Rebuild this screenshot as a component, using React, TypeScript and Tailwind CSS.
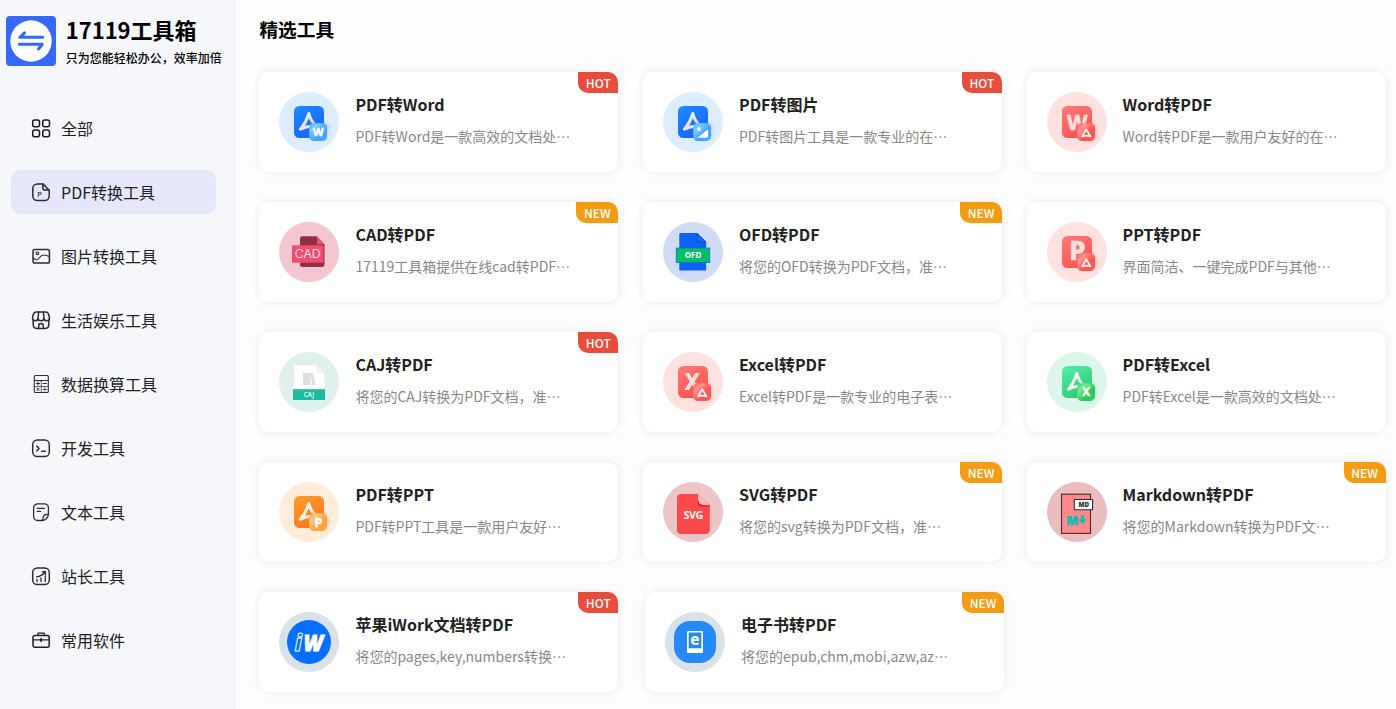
import type { ReactNode } from "react";

const LETTER = "'Noto Sans', 'Noto Sans CJK SC', sans-serif";

/* ---------- sidebar icons (20 x 20) ---------- */

function Line({ children, color = "#2b2d33" }: { children: ReactNode; color?: string }) {
  return (
    <svg width="20" height="20" viewBox="0 0 20 20" fill="none" stroke={color} strokeWidth="1.5" strokeLinecap="round" strokeLinejoin="round" className="shrink-0">
      {children}
    </svg>
  );
}

const menu: { label: string; icon: ReactNode; active?: boolean }[] = [
  {
    label: "全部",
    icon: (
      <Line color="#1a1a1a">
        <rect x="1.7" y="2" width="6.8" height="6.8" rx="2" />
        <rect x="11.7" y="2" width="6.8" height="6.8" rx="2" />
        <rect x="1.7" y="12" width="6.8" height="6.8" rx="2" />
        <rect x="11.7" y="12" width="6.8" height="6.8" rx="2" />
      </Line>
    ),
  },
  {
    label: "PDF转换工具",
    active: true,
    icon: (
      <Line>
        <path d="M11.8 1.9H6.2A4.4 4.4 0 0 0 1.8 6.3v7.8a4.4 4.4 0 0 0 4.4 4.4h7.6a4.4 4.4 0 0 0 4.4-4.4V8.2z" />
        <path d="M11.8 1.9v3.6a2.6 2.6 0 0 0 2.6 2.6h3.8" />
        <text x="8.6" y="14.9" fontSize="7.5" fontWeight="500" fill="#2b2d33" stroke="none" textAnchor="middle" style={{ fontFamily: LETTER }}>
          P
        </text>
      </Line>
    ),
  },
  {
    label: "图片转换工具",
    icon: (
      <Line>
        <rect x="2" y="3.6" width="16.4" height="13.4" rx="1.8" />
        <circle cx="6.4" cy="7.3" r="1.3" strokeWidth="1.2" />
        <path d="M2.2 12.4c1.300 0 2.200 1.300 3.500 1.600 1.900.2 2.900-5 7.100-5 2.500 0 3.400 1 5.500 1.500" strokeWidth="1.2" />
      </Line>
    ),
  },
  {
    label: "生活娱乐工具",
    icon: (
      <Line>
        <path d="M5.200 2h9.600c1.800 0 2.600 1.200 3 3l.7 3c0 1.700-1.200 2.700-2.700 2.700s-2.800-1-2.800-2.500c0 1.500-1.300 2.500-3 2.500s-3-1-3-2.500c0 1.500-1.300 2.500-2.800 2.500S1.500 9.700 1.500 8l.7-3c.4-1.800 1.200-3 3-3Z" />
        <path d="M7 8.200 7.700 2M13 8.200 12.300 2" />
        <path d="M2.200 10v4.500c0 2.800 1.200 4 4 4h7.600c2.800 0 4-1.200 4-4V10" />
        <path d="M7.700 18.400v-2.500a2.300 2.300 0 0 1 4.600 0v2.500" />
      </Line>
    ),
  },
  {
    label: "数据换算工具",
    icon: (
      <Line>
        <g strokeWidth="1.100">
          <rect x="3.300" y="1.500" width="14" height="17" rx="1" />
          <path d="M3.500 6.500h14" />
          <path d="M10.300 7v11M4 12.500h13" strokeWidth="0.700" />
          <path d="M5.300 9.500h3.400M7 7.900v3.200M12.100 9.500h3.400M5.700 14l2.600 2.600M8.300 14l-2.600 2.600M12.100 15.400h3.400M13.800 13.700v.1M13.800 17v.1" strokeWidth="1" />
        </g>
      </Line>
    ),
  },
  {
    label: "开发工具",
    icon: (
      <Line>
        <rect x="1.700" y="2" width="16.600" height="16.600" rx="4.600" />
        <path d="m5.800 8 2.300 2.500-2.300 2.500M10.700 13.200h3.600" />
      </Line>
    ),
  },
  {
    label: "文本工具",
    icon: (
      <Line>
        <g strokeWidth="1.300">
          <path d="M10.700 18.500H6.600a4 4 0 0 1-4-4V5.800a4 4 0 0 1 4-4h6.800a4 4 0 0 1 4 4v6.500c0 3.400-3.300 6.200-6.700 6.200Z" />
          <path d="M17.300 12.500c-4.300-.3-5.500 1-5.500 5.700" />
          <path d="M6.300 6.300h7.200M6.300 9.400h3.200" />
        </g>
      </Line>
    ),
  },
  {
    label: "站长工具",
    icon: (
      <Line>
        <rect x="1.700" y="2" width="16.600" height="16.600" rx="4.600" />
        <path d="M6 15.500v-2M10 15.500v-3.600M14.300 15.500v-5.500" strokeWidth="1.300" />
        <path d="M5.600 10.900c3.500-.4 6-1.800 8.500-4.900M11.400 5.700h3v3" strokeWidth="1.400" />
      </Line>
    ),
  },
  {
    label: "常用软件",
    icon: (
      <Line color="#1f2024">
        <rect x="2" y="5.500" width="16.200" height="11.700" rx="2" />
        <path d="M7 5.300V3.200h6.200v2.100M2.200 9.900h15.900" strokeWidth="1.300" />
        <path d="M10.100 8.900v2.200" strokeWidth="2" />
      </Line>
    ),
  },
];

/* ---------- tool icons (60 x 60) ---------- */

function Disc({ color, children }: { color: string; children: ReactNode }) {
  return (
    <svg width="60" height="60" viewBox="0 0 60 60" className="shrink-0">
      <circle cx="30" cy="30" r="30" fill={color} />
      {children}
    </svg>
  );
}

function Adobe({ color }: { color: string }) {
  return (
    <path
      d="M29.800 21.500C28 27.500 25 33 21.300 37.200C25.500 34.800 31 33.700 37 34.400M29.800 21.500C31 26.500 33.600 31 38 35"
      fill="none"
      stroke={color}
      strokeWidth="3.100"
      strokeLinecap="round"
      strokeLinejoin="round"
    />
  );
}

type PairProps = {
  id: string;
  disc: string;
  from: string;
  to: string;
  badgeFrom: string;
  badgeTo: string;
  main: ReactNode;
  mini: ReactNode;
};

function Pair({ id, disc, from, to, badgeFrom, badgeTo, main, mini }: PairProps) {
  return (
    <Disc color={disc}>
      <defs>
        <linearGradient id={`${id}a`} x1="0" y1="0" x2="0.500" y2="1">
          <stop stopColor={from} />
          <stop offset="1" stopColor={to} />
        </linearGradient>
        <linearGradient id={`${id}b`} x1="0" y1="0" x2="1" y2="1">
          <stop stopColor={badgeTo} />
          <stop offset="0.250" stopColor={badgeFrom} />
          <stop offset="0.600" stopColor={badgeTo} />
          <stop offset="0.850" stopColor={badgeTo} />
          <stop offset="1" stopColor={badgeFrom} />
        </linearGradient>
        <filter id={`${id}s`} x="-50%" y="-50%" width="200%" height="200%">
          <feGaussianBlur stdDeviation="1.600" />
        </filter>
      </defs>
      <rect x="15" y="14" width="30" height="32" rx="5.500" fill={`url(#${id}a)`} />
      {main}
      <rect x="31" y="30.500" width="18" height="17" rx="5" fill={to} opacity="0.250" filter={`url(#${id}s)`} />
      <rect x="30.300" y="31.300" width="17.700" height="17.700" rx="4.500" fill={`url(#${id}b)`} />
      {mini}
    </Disc>
  );
}

type LetterProps = { x: number; y: number; size: number; children: string; color?: string; weight?: number; font?: string; stroke?: number };

function Letter({ x, y, size, children, color = "#fff", weight = 700, font = LETTER, stroke = 0 }: LetterProps) {
  return (
    <text x={x} y={y} fontSize={size} fontWeight={weight} fill={color} stroke={stroke ? color : "none"} strokeWidth={stroke} textAnchor="middle" style={{ fontFamily: font }}>
      {children}
    </text>
  );
}

const miniAdobe = (
  <path d="M39.200 37.300 35 44.500c3-1.200 5.800-1.200 8.600 0Z" fill="none" stroke="#fff" strokeWidth="1.600" strokeLinejoin="round" strokeLinecap="round" />
);

const blue = { disc: "#dcedff", from: "#1a8bff", to: "#1c66fb", badgeFrom: "#7cccff", badgeTo: "#43a4ff" };
const red = { disc: "#ffe1df", from: "#ff7a7a", to: "#fd5350", badgeFrom: "#ff9693", badgeTo: "#ff5553" };

const icons: Record<string, ReactNode> = {
  word: <Pair id="w" {...blue} main={<Adobe color="#dcebff" />} mini={<Letter x={39.200} y={44} size={11} weight={800} stroke={0.300}>W</Letter>} />,
  image: (
    <Pair
      id="i"
      {...blue}
      main={<Adobe color="#dcebff" />}
      mini={
        <g fill="#fff">
          <circle cx="36" cy="37.200" r="2" />
          <path d="M34.800 45.600 43.800 38.200q1.400-1 1.400.7v5q0 1.900-1.800 1.900h-8q-1.200 0-.6-.2Z" />
        </g>
      }
    />
  ),
  fromWord: <Pair id="fw" {...red} main={<Letter x={30.200} y={37.500} size={21} color="#ffe0df" weight={800} stroke={0.400}>W</Letter>} mini={miniAdobe} />,
  fromPpt: <Pair id="fp" {...red} main={<Letter x={30.300} y={38.300} size={26} color="#ffe0df" weight={800} stroke={0.600}>P</Letter>} mini={miniAdobe} />,
  fromExcel: <Pair id="fx" {...red} main={<Letter x={29.200} y={38} size={22.500} color="#ffe0df" weight={800}>X</Letter>} mini={miniAdobe} />,
  excel: (
    <Pair id="x" disc="#dcf7e9" from="#56edb0" to="#2ecb70" badgeFrom="#76ea96" badgeTo="#30c75e" main={<Adobe color="#e8faef" />} mini={<Letter x={39.200} y={44.200} size={12} weight={800} stroke={0.300}>X</Letter>} />
  ),
  ppt: (
    <Pair id="p" disc="#ffecd9" from="#ff9e2c" to="#fc781c" badgeFrom="#ffca86" badgeTo="#ffa340" main={<Adobe color="#fff0df" />} mini={<Letter x={39.400} y={44.500} size={12.500} weight={800} stroke={0.300}>P</Letter>} />
  ),
  cad: (
    <Disc color="#f4c6d0">
      <path d="M23.500 14.300H37.500L45.500 22.500V42q0 3-2.500 3H23.500q-2.500 0-2.500-2.500V17q0-2.700 2.500-2.700Z" fill="#8c3043" />
      <path d="M38 14.300 45.300 22.300H38Z" fill="#f24c70" />
      <rect x="13" y="23.300" width="31.500" height="17.400" rx="0.800" fill="#f24c70" />
      <Letter x={28.700} y={36.200} size={12.300} weight={300} font="Inter, sans-serif">CAD</Letter>
    </Disc>
  ),
  ofd: (
    <Disc color="#cfdcf4">
      <path d="M16.300 12q0-1 1-1H34.300l8.900 9V47.500q0 1-1 1H17.300q-1 0-1-1Z" fill="#0f62f3" />
      <path d="M34.300 11.500v8.500h8.700Z" fill="#0f6cf5" stroke="#0546c8" strokeWidth="0.800" />
      <rect x="13.200" y="26" width="33.600" height="14.600" fill="#02bf66" stroke="#0a70dc" strokeWidth="0.800" />
      <Letter x={30} y={36.200} size={8} weight={700}>OFD</Letter>
    </Disc>
  ),
  caj: (
    <Disc color="#e0f0ec">
      <path d="M14.300 12.500H38.300l7.500 7.800V38H14.300Z" fill="#fff" stroke="#dfe6e4" strokeWidth="0.600" />
      <path d="M38.300 12.500v7.900h7.500Z" fill="#f4f7f6" stroke="#d9e2df" strokeWidth="0.600" />
      <path d="M24 21h4v12h-4zM28.300 21h3.200v12h-3.200zM31.500 21.300l2.500-.6L36.200 32.600 33.200 33.200z" fill="#dcdcdc" />
      <rect x="14" y="37.200" width="32" height="10.800" fill="#1bbc9f" />
      <Letter x={30} y={45} size={6.300} weight={500}>CAJ</Letter>
    </Disc>
  ),
  svg: (
    <Disc color="#edc5c6">
      <path d="M18 12H34.700L46.800 24.500V48q0 4-4 4H18q-4 0-4-4V16q0-4 4-4Z" fill="#fc494b" />
      <path d="M34.700 12v7.500q0 5 5 5h7.300v-1.500Z" fill="#f80d16" />
      <path d="M34.900 11.800v5.200q.600 6 6 6.200h6Z" fill="#f8bcbd" />
      <Letter x={30.400} y={37.300} size={10.300} weight={600} stroke={0.200}>SVG</Letter>
    </Disc>
  ),
  md: (
    <Disc color="#ebbdbf">
      <rect x="14.500" y="12.200" width="29" height="39.200" fill="#ff898b" stroke="#3b2f38" strokeWidth="1.100" />
      <rect x="27.300" y="17.500" width="18.300" height="10.200" rx="0.500" fill="#fff" stroke="#2e3038" strokeWidth="1.100" />
      <Letter x={36.800} y={24.900} size={6.200} weight={900} color="#26282f">MD</Letter>
      <Letter x={25.200} y={42.500} size={12} weight={900} color="#1fb9ad" font="Inter, sans-serif" stroke={0.600}>M</Letter>
      <path d="M33.900 33.300h3.200v4h2.400l-4 5.200-4-5.200h2.400Z" fill="#1fb9ad" />
    </Disc>
  ),
  iwork: (
    <Disc color="#d9e1e9">
      <circle cx="30" cy="30" r="22" fill="#036ffc" />
      <text x="15.800" y="38.500" fontSize="22.500" fontWeight="900" fontStyle="italic" fill="#036ffc" stroke="#fff" strokeWidth="1" textLength="7" lengthAdjust="spacingAndGlyphs" style={{ fontFamily: LETTER }}>
        i
      </text>
      <text x="24.500" y="38.500" fontSize="23.500" fontWeight="900" fontStyle="italic" fill="#fff" stroke="#fff" strokeWidth="0.900" textLength="19.500" lengthAdjust="spacingAndGlyphs" style={{ fontFamily: LETTER }}>
        W
      </text>
    </Disc>
  ),
  ebook: (
    <Disc color="#d9e1e9">
      <rect x="9" y="9" width="42" height="42" rx="16" fill="#258af6" />
      <path fillRule="evenodd" d="M23 19h14q1 0 1 1v20q0 1-1 1H23q-1 0-1-1V20q0-1 1-1Zm.700 1.500v15.800h12.600V20.500Z" fill="#fff" />
      <Letter x={30} y={32.600} size={15.500} weight={700}>e</Letter>
    </Disc>
  ),
};

/* ---------- tool cards ---------- */

type Tool = { icon: string; title: string; desc: string; tag?: "HOT" | "NEW" };

const rows: Tool[][] = [
  [
    { icon: "word", title: "PDF转Word", desc: "PDF转Word是一款高效的文档处…", tag: "HOT" },
    { icon: "image", title: "PDF转图片", desc: "PDF转图片工具是一款专业的在…", tag: "HOT" },
    { icon: "fromWord", title: "Word转PDF", desc: "Word转PDF是一款用户友好的在…" },
  ],
  [
    { icon: "cad", title: "CAD转PDF", desc: "17119工具箱提供在线cad转PDF…", tag: "NEW" },
    { icon: "ofd", title: "OFD转PDF", desc: "将您的OFD转换为PDF文档，准…", tag: "NEW" },
    { icon: "fromPpt", title: "PPT转PDF", desc: "界面简洁、一键完成PDF与其他…" },
  ],
  [
    { icon: "caj", title: "CAJ转PDF", desc: "将您的CAJ转换为PDF文档，准…", tag: "HOT" },
    { icon: "fromExcel", title: "Excel转PDF", desc: "Excel转PDF是一款专业的电子表…" },
    { icon: "excel", title: "PDF转Excel", desc: "PDF转Excel是一款高效的文档处…" },
  ],
  [
    { icon: "ppt", title: "PDF转PPT", desc: "PDF转PPT工具是一款用户友好…" },
    { icon: "svg", title: "SVG转PDF", desc: "将您的svg转换为PDF文档，准…", tag: "NEW" },
    { icon: "md", title: "Markdown转PDF", desc: "将您的Markdown转换为PDF文…", tag: "NEW" },
  ],
  [
    { icon: "iwork", title: "苹果iWork文档转PDF", desc: "将您的pages,key,numbers转换…", tag: "HOT" },
    { icon: "ebook", title: "电子书转PDF", desc: "将您的epub,chm,mobi,azw,az…", tag: "NEW" },
  ],
];

function Card({ tool }: { tool: Tool }) {
  return (
    <article className="relative flex h-[100px] w-[359px] gap-4 rounded-[10px] bg-white p-5 shadow-[0_0_10px_rgba(0,0,0,0.08)]">
      {icons[tool.icon]}
      <div>
        <h4 className="text-base leading-6 font-bold whitespace-nowrap text-[#222]">{tool.title}</h4>
        <p className="mt-[10px] text-sm leading-[21px] whitespace-nowrap text-[#888]">{tool.desc}</p>
      </div>
      {tool.tag && (
        <span
          className={`absolute top-0 right-0 h-[21px] rounded-tr-[10px] rounded-bl-[10px] pr-[7.600px] pl-[7.600px] text-xs leading-[21px] font-medium text-white ${
            tool.tag === "HOT" ? "bg-[#e74c3c]" : "bg-[#f39c12]"
          }`}
        >
          {tool.tag}
        </span>
      )}
    </article>
  );
}

export default function App() {
  return (
    <div lang="zh-CN" className="flex h-[709px] w-[1396px] overflow-hidden bg-[#fdfdfd] font-['Noto_Sans_CJK_SC',sans-serif] text-black">
      <aside className="w-[236px] shrink-0 bg-[#f6f7fb]">
        <header className="flex h-[106px] gap-[9.700px] pt-4 pl-[6px]">
          <svg width="50" height="50" viewBox="0 0 50 50" className="shrink-0">
            <rect width="50" height="50" rx="4" fill="#3668fc" />
            <circle cx="25" cy="25" r="20.700" fill="#fff" />
            <path d="M36.800 21.300H13.800L18.500 16.800M13.300 28.300H36.300L32.500 33" fill="none" stroke="#3668fc" strokeWidth="3" strokeLinecap="round" strokeLinejoin="round" />
          </svg>
          <div>
            <h1 className="text-[22px] leading-[26px] font-bold whitespace-nowrap">17119工具箱</h1>
            <p className="mt-[7px] text-xs leading-[18px] font-medium whitespace-nowrap">只为您能轻松办公，效率加倍</p>
          </div>
        </header>
        <nav className="flex flex-col gap-5 pl-[11px]">
          {menu.map((m) => (
            <a key={m.label} className={`flex h-11 w-[205px] items-center gap-[10px] rounded-[10px] pl-5 ${m.active ? "bg-[#e7e7fb]" : ""}`}>
              {m.icon}
              <span className="pb-px text-base leading-6 text-[#222]">{m.label}</span>
            </a>
          ))}
        </nav>
      </aside>
      <main className="pl-[23.400px]">
        <h3 className="h-[72px] pt-[15px] text-[18.720px] leading-7 font-bold">精选工具</h3>
        <div className="flex flex-col gap-[30px]">
          {rows.map((row) => (
            <div key={row[0].icon} className={`flex ${row.length === 3 ? "gap-[24.600px]" : "gap-[26.600px]"}`}>
              {row.map((t) => (
                <Card key={t.icon} tool={t} />
              ))}
            </div>
          ))}
        </div>
      </main>
    </div>
  );
}
